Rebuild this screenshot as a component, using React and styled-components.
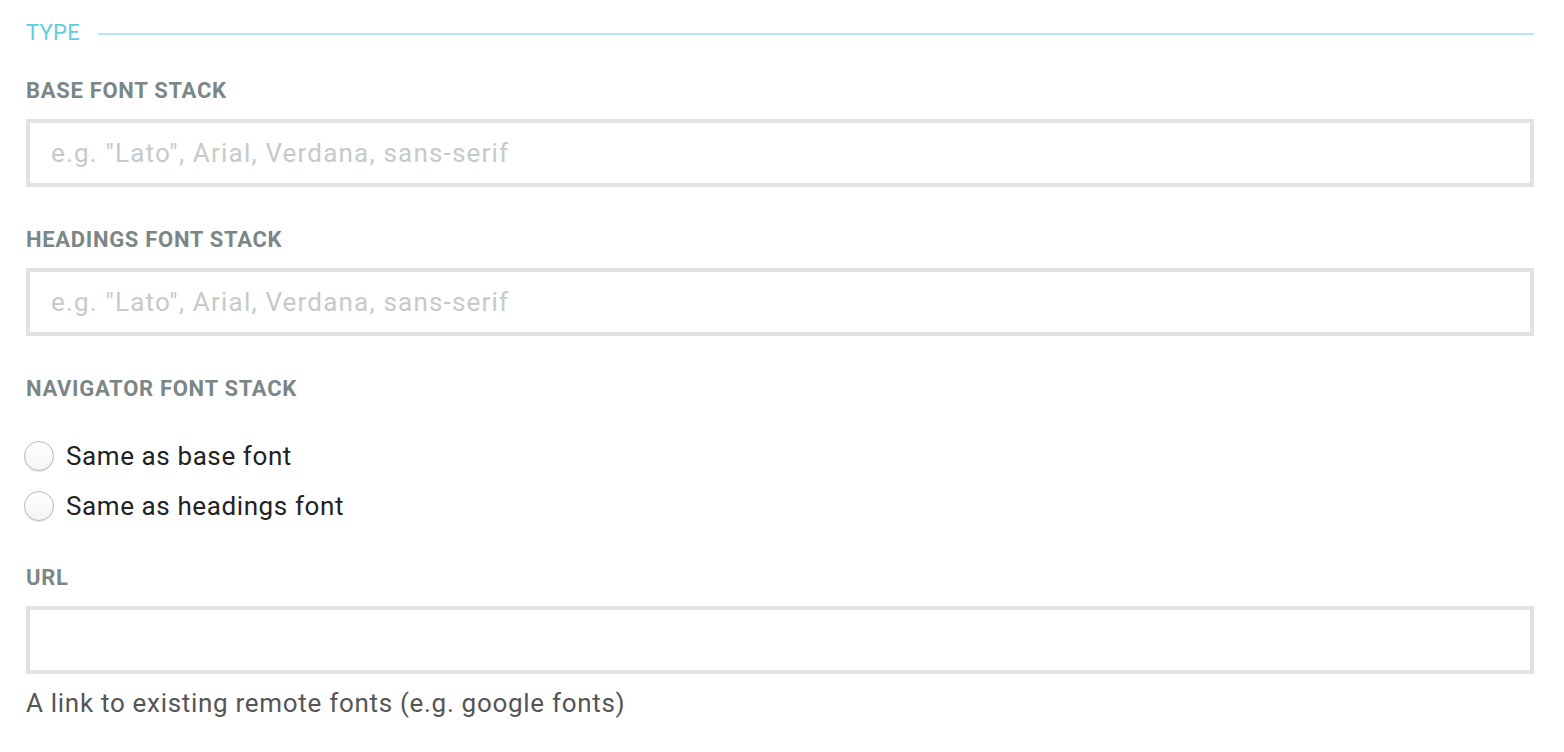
import React from 'react';
import styled, { createGlobalStyle } from 'styled-components';

const GlobalStyle = createGlobalStyle`
  body {
    margin: 0;
    background: #fff;
    font-family: Roboto, "Liberation Sans", sans-serif;
  }
`;

const Page = styled.div`
  padding: 16px 30px 0 26px;
  width: 1564px;
  box-sizing: border-box;
`;

const SectionHead = styled.div`
  display: flex;
  align-items: center;
  gap: 18px;
  height: 32px;
  margin-bottom: 31px;
`;

const SectionTitle = styled.span`
  color: #5ecde0;
  font-size: 22px;
  font-weight: 400;
  letter-spacing: 0.3px;
`;

const Rule = styled.div`
  flex: 1;
  height: 2px;
  background: #b3e6ee;
  margin-top: 4px;
`;

const Field = styled.div`
  display: flex;
  flex-direction: column;
  margin-bottom: ${props => props.$gap || 41}px;
`;

const Label = styled.label`
  color: #7b8686;
  font-size: 22px;
  font-weight: 700;
  letter-spacing: 0.7px;
  line-height: 24px;
  margin-bottom: ${props => props.$below || 16}px;
`;

const Input = styled.input`
  box-sizing: border-box;
  width: 100%;
  height: 68px;
  border: 4px solid #e2e2e2;
  background: #fff;
  padding: 0 21px;
  font-family: inherit;
  font-size: 26px;
  letter-spacing: 1.2px;
  color: #444;
  outline: none;
  &::placeholder {
    color: #c6caca;
  }
`;

const RadioRow = styled.label`
  display: flex;
  align-items: center;
  gap: 12px;
  height: 50px;
  margin-left: -2px;
  color: #222;
  font-size: 26px;
  letter-spacing: 0.6px;
`;

const Radio = styled.span`
  flex: none;
  width: 30px;
  height: 30px;
  box-sizing: border-box;
  border-radius: 50%;
  border: 1.5px solid #b8b8b8;
  background: linear-gradient(#fff, #f5f5f5);
  box-shadow: 0 1px 1px rgba(0, 0, 0, 0.12);
`;

const Help = styled.div`
  margin-top: 14px;
  color: #555;
  font-size: 26px;
  letter-spacing: 0.7px;
`;

export default function App() {
  return (
    <Page>
      <GlobalStyle />
      <SectionHead>
        <SectionTitle>TYPE</SectionTitle>
        <Rule />
      </SectionHead>

      <Field>
        <Label>BASE FONT STACK</Label>
        <Input placeholder='e.g. "Lato", Arial, Verdana, sans-serif' />
      </Field>

      <Field>
        <Label>HEADINGS FONT STACK</Label>
        <Input placeholder='e.g. "Lato", Arial, Verdana, sans-serif' />
      </Field>

      <Field $gap={35}>
        <Label $below={30}>NAVIGATOR FONT STACK</Label>
        <RadioRow>
          <Radio />
          Same as base font
        </RadioRow>
        <RadioRow>
          <Radio />
          Same as headings font
        </RadioRow>
      </Field>

      <Field>
        <Label>URL</Label>
        <Input />
        <Help>A link to existing remote fonts (e.g. google fonts)</Help>
      </Field>
    </Page>
  );
}
